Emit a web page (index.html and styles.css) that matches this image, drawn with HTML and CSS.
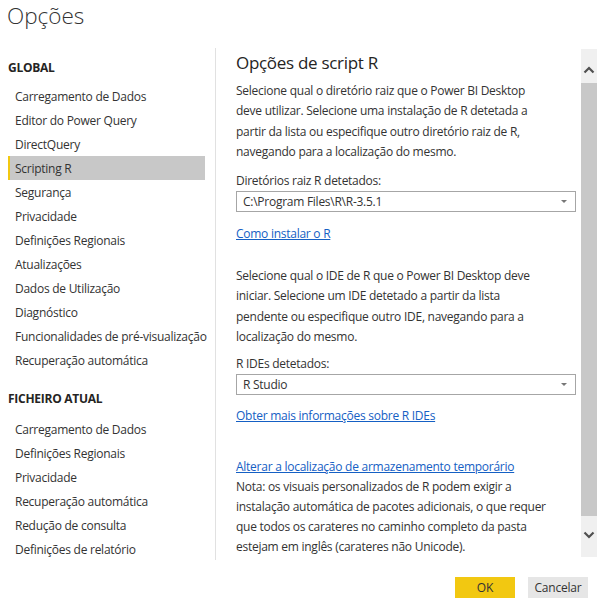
FILE: index.html
```html
<!DOCTYPE html>
<html lang="pt">
<head>
<meta charset="utf-8">
<title>Opções</title>
<link rel="stylesheet" href="styles.css">
</head>
<body>
<div class="dialog">
  <header class="title">Opções</header>
  <div class="main">
    <nav class="sidebar">
      <div class="group-title">GLOBAL</div>
      <ul class="nav-list">
        <li class="nav-item">Carregamento de Dados</li>
        <li class="nav-item">Editor do Power Query</li>
        <li class="nav-item">DirectQuery</li>
        <li class="nav-item active">Scripting R</li>
        <li class="nav-item">Segurança</li>
        <li class="nav-item">Privacidade</li>
        <li class="nav-item">Definições Regionais</li>
        <li class="nav-item">Atualizações</li>
        <li class="nav-item">Dados de Utilização</li>
        <li class="nav-item">Diagnóstico</li>
        <li class="nav-item">Funcionalidades de pré-visualização</li>
        <li class="nav-item">Recuperação automática</li>
      </ul>
      <div class="group-title second">FICHEIRO ATUAL</div>
      <ul class="nav-list">
        <li class="nav-item">Carregamento de Dados</li>
        <li class="nav-item">Definições Regionais</li>
        <li class="nav-item">Privacidade</li>
        <li class="nav-item">Recuperação automática</li>
        <li class="nav-item">Redução de consulta</li>
        <li class="nav-item">Definições de relatório</li>
      </ul>
    </nav>
    <section class="content-area">
      <div class="content">
        <h2 class="heading">Opções de script R</h2>
        <p class="para para-1">Selecione qual o diretório raiz que o Power BI Desktop<br>deve utilizar. Selecione uma instalação de R detetada a<br>partir da lista ou especifique outro diretório raiz de R,<br>navegando para a localização do mesmo.</p>
        <div class="label label-1">Diretórios raiz R detetados:</div>
        <div class="select"><span>C:\Program Files\R\R-3.5.1</span><span class="caret"></span></div>
        <a class="link link-1" href="#">Como instalar o R</a>
        <p class="para para-2">Selecione qual o IDE de R que o Power BI Desktop deve<br>iniciar. Selecione um IDE detetado a partir da lista<br>pendente ou especifique outro IDE, navegando para a<br>localização do mesmo.</p>
        <div class="label label-2">R IDEs detetados:</div>
        <div class="select"><span>R Studio</span><span class="caret"></span></div>
        <a class="link link-2" href="#">Obter mais informações sobre R IDEs</a>
        <a class="link link-3" href="#">Alterar a localização de armazenamento temporário</a>
        <p class="para note">Nota: os visuais personalizados de R podem exigir a<br>instalação automática de pacotes adicionais, o que requer<br>que todos os carateres no caminho completo da pasta<br>estejam em inglês (carateres não Unicode).</p>
      </div>
      <div class="scrollbar">
        <div class="sb-btn up"><svg width="12" height="8" viewBox="0 0 12 8"><path d="M1.5 6.5 L6 2 L10.5 6.5" fill="none" stroke="#505050" stroke-width="2.2"/></svg></div>
        <div class="sb-thumb"></div>
        <div class="sb-btn down"><svg width="12" height="8" viewBox="0 0 12 8"><path d="M1.5 1.5 L6 6 L10.5 1.5" fill="none" stroke="#505050" stroke-width="2.2"/></svg></div>
      </div>
    </section>
  </div>
  <footer class="footer">
    <button class="btn btn-ok">OK</button>
    <button class="btn btn-cancel">Cancelar</button>
  </footer>
</div>
</body>
</html>
```
FILE: styles.css
```css
* { box-sizing: border-box; }
html, body { margin: 0; padding: 0; background: #fff; }
body {
  font-family: "Open Sans", "Noto Sans", sans-serif;
  font-size: 12px;
  letter-spacing: -0.26px;
  color: #333;
}
.dialog { width: 605px; height: 608px; display: flex; flex-direction: column; }
.title {
  height: 48px;
  padding-left: 7px;
  padding-top: 1px;
  font-size: 22.5px;
  font-weight: 300;
  letter-spacing: 0;
  line-height: 30px;
  color: #333;
}
.main { display: flex; height: 512px; }
.sidebar {
  width: 216px;
  border-right: 1px solid #e1e1e1;
  padding-top: 8px;
}
.group-title {
  height: 24px;
  line-height: 24px;
  padding-left: 8px;
  font-weight: 700;
  color: #252423;
  margin-bottom: 4px;
}
.group-title.second { margin-top: 15px; margin-bottom: 6px; }
.nav-list { list-style: none; margin: 0; padding: 0; }
.nav-item {
  height: 24px;
  line-height: 26px;
  margin-left: 8px;
  width: 197px;
  padding-left: 7px;
  white-space: nowrap;
  color: #333;
}
.nav-item.active {
  background: #c8c8c8;
  border-left: 2px solid #f2c811;
  padding-left: 5px;
}
.content-area { flex: 1; display: flex; padding-left: 20px; }
.content { width: 340px; display: flex; flex-direction: column; align-items: flex-start; }
.heading {
  margin: 3px 0 0;
  font-size: 17px;
  font-weight: 400;
  letter-spacing: -0.3px;
  line-height: 24px;
  color: #252423;
}
.para { margin: 0; line-height: 20.3px; white-space: nowrap; }
.para-1 { margin-top: 6px; }
.para-2 { margin-top: 22px; }
.label { line-height: 20px; }
.label-1 { margin-top: 9px; }
.label-2 { margin-top: 7px; }
.select {
  width: 340px;
  height: 21px;
  border: 1px solid #a6a6a6;
  display: flex;
  align-items: center;
  justify-content: space-between;
  padding: 0 8px 0 6px;
  line-height: 19px;
}
.caret {
  width: 0; height: 0;
  border-left: 3px solid transparent;
  border-right: 3px solid transparent;
  border-top: 3px solid #777;
}
.link { color: #1560c4; text-decoration: underline; line-height: 20px; }
.link-1 { margin-top: 12px; }
.link-2 { margin-top: 11px; }
.link-3 { margin-top: 31px; }
.note { line-height: 20px; }
.scrollbar {
  margin-left: 5px;
  margin-top: 1px;
  width: 16px;
  height: 508px;
  background: #f0f0f0;
  display: flex;
  flex-direction: column;
}
.sb-btn { display: flex; align-items: center; justify-content: center; }
.sb-btn.up { height: 34px; padding-top: 8px; }
.sb-btn.down { height: 41px; padding-bottom: 3px; }
.sb-thumb { flex: 1; background: #c8c8c8; }
.footer {
  flex: 1;
  display: flex;
  justify-content: flex-end;
  align-items: flex-start;
  gap: 13px;
  padding: 17px 17px 0 0;
}
.btn {
  width: 60px;
  height: 21px;
  border: none;
  font-family: inherit;
  font-size: 12px;
  letter-spacing: -0.2px;
  color: #333;
  padding: 0;
}
.btn-ok { background: #f2c811; }
.btn-cancel { background: #e6e6e6; }
```
